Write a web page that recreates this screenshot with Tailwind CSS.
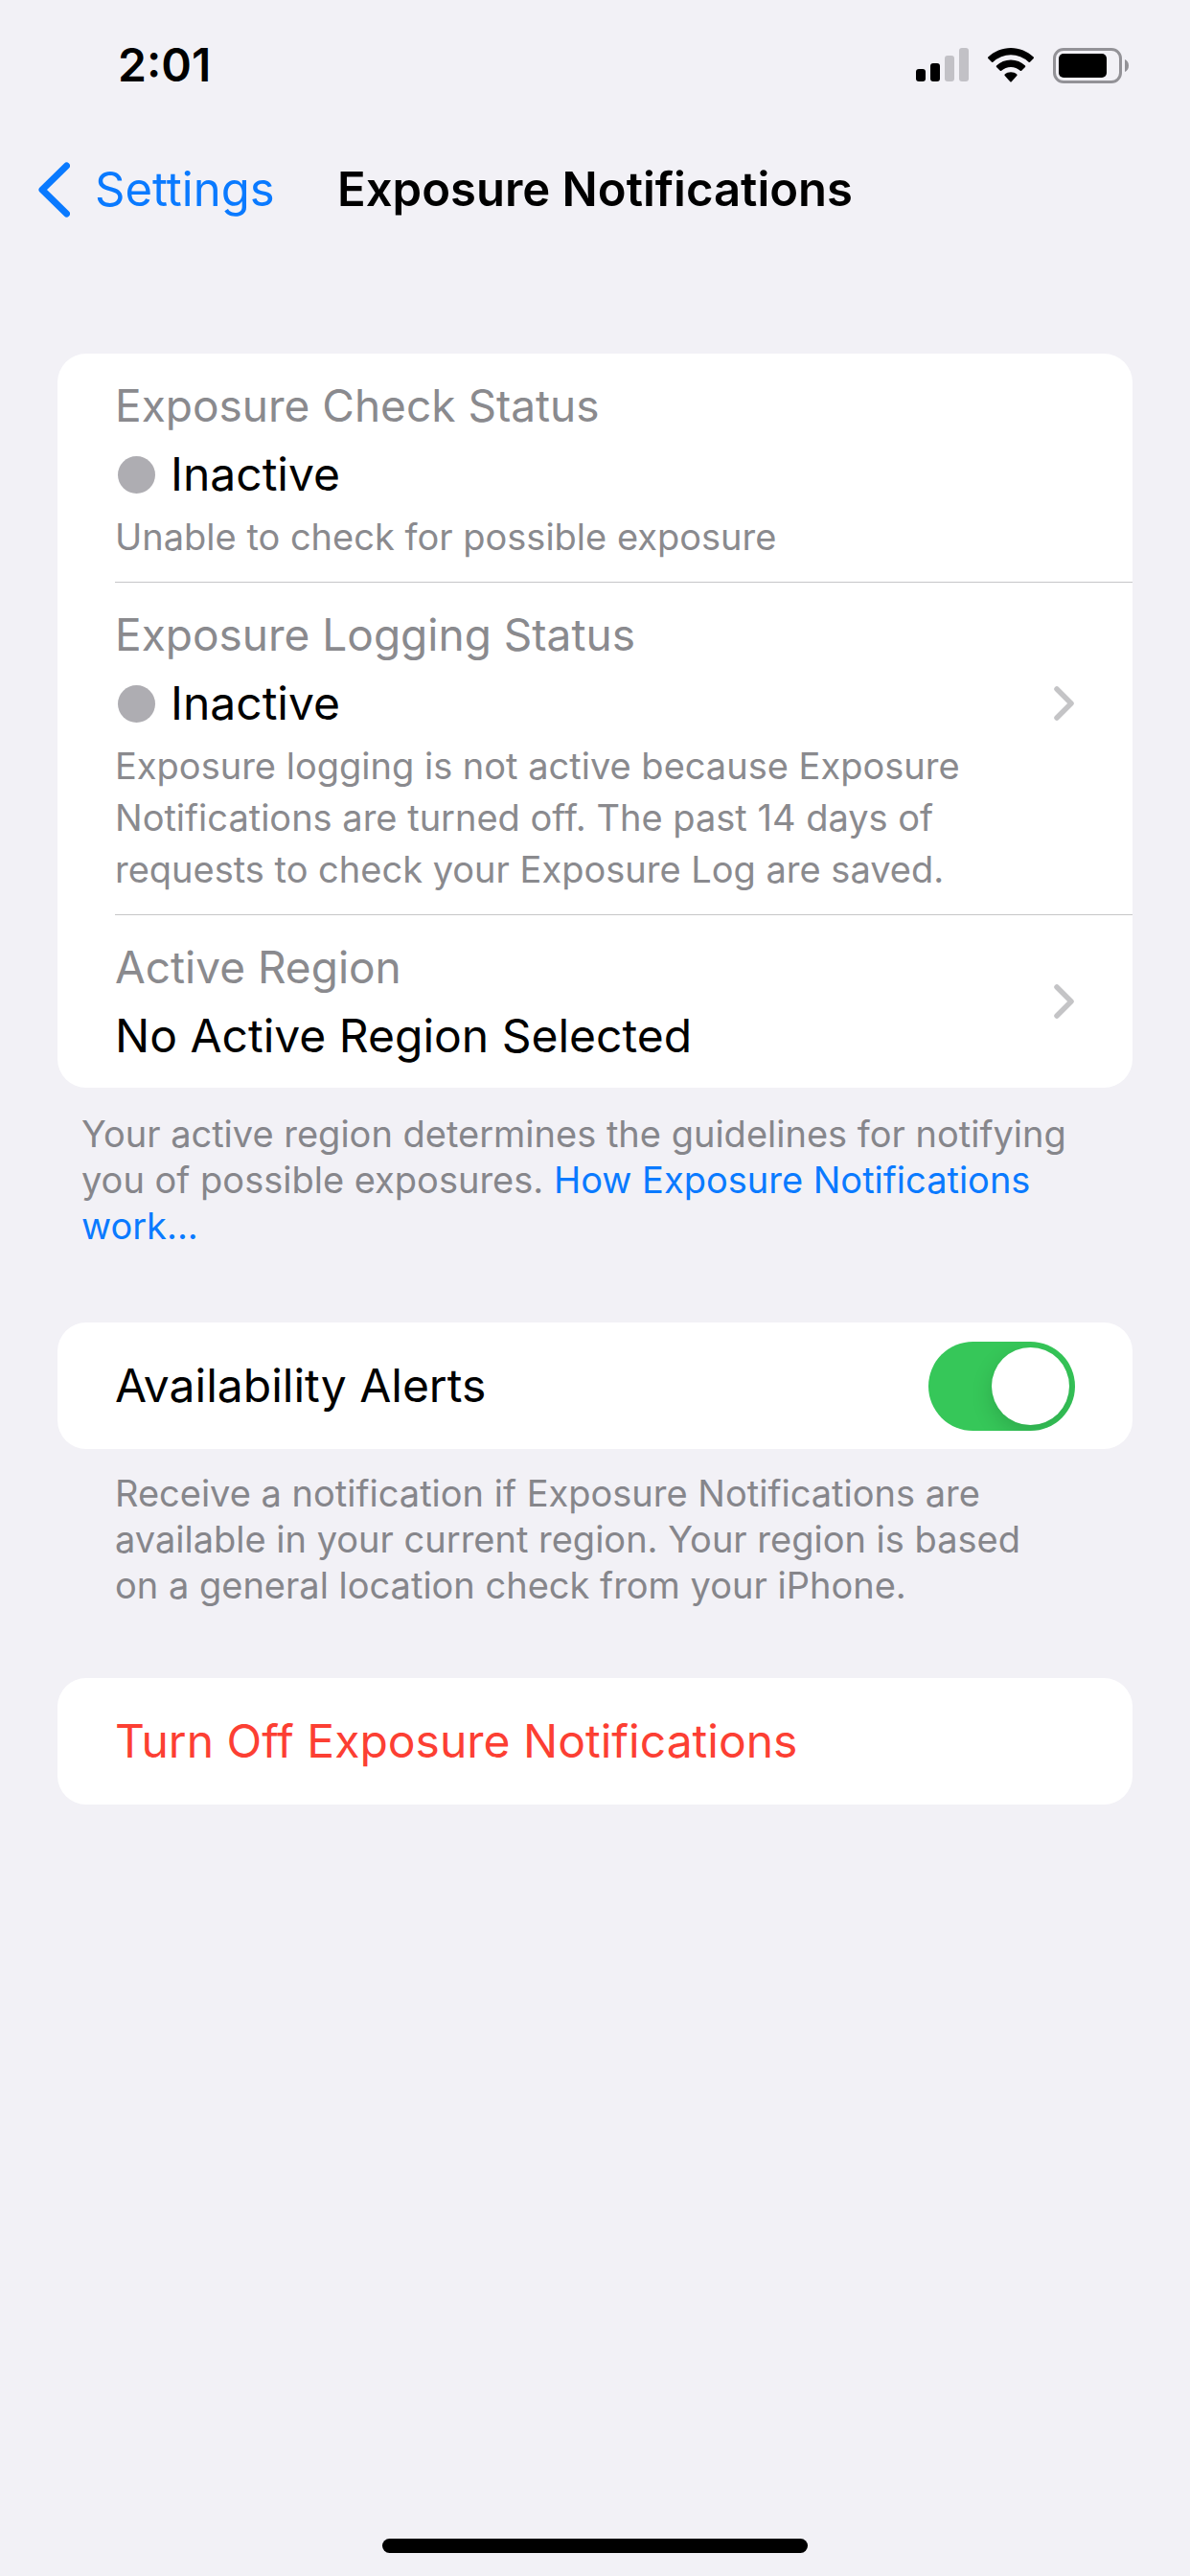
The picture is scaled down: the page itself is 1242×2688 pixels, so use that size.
<!DOCTYPE html>
<html lang="en">
<head>
<meta charset="utf-8">
<meta name="viewport" content="width=device-width, initial-scale=1">
<title>Exposure Notifications</title>
<script src="https://cdn.jsdelivr.net/npm/@tailwindcss/browser@4"></script>
</head>
<body class="flex min-h-screen flex-col bg-[#f2f1f6] font-[Inter,sans-serif] text-black">

<!-- Status bar -->
<div class="flex h-[136px] items-center justify-between pr-16 pl-[123px]">
  <time class="text-[48px] leading-[60px] font-semibold">2:01</time>
  <div class="flex items-center gap-5">
    <svg class="h-9 w-[55px]" viewBox="0 0 55 36" role="img" aria-label="Signal: 2 of 4 bars">
      <rect x="0" y="22" width="10" height="13" rx="3"/>
      <rect x="15" y="16" width="10" height="19" rx="3"/>
      <rect x="30" y="8" width="10" height="27" rx="3" fill="#c2c1c6"/>
      <rect x="45" y="0" width="10" height="35" rx="3" fill="#c2c1c6"/>
    </svg>
    <svg class="h-9 w-12" viewBox="0 0 48 36" role="img" aria-label="Wi-Fi">
      <path d="M24 0C33 0 41.500 3.600 47.700 9.600Q48.300 10.300 47.700 11L44 14.800Q43.300 15.400 42.600 14.800A27 27 0 0 0 5.400 14.800Q4.700 15.400 4 14.800L.3 11Q-.3 10.300 .3 9.600C6.500 3.600 15 0 24 0Z"/>
      <path d="M24 12.600C29.700 12.600 35 14.800 39 18.600Q39.600 19.300 39 20L35.200 23.800Q34.500 24.400 33.800 23.800A14.500 14.500 0 0 0 14.200 23.800Q13.500 24.400 12.800 23.800L9 20Q8.400 19.300 9 18.600C13 14.800 18.300 12.600 24 12.600Z"/>
      <path d="M24 25.200C26.400 25.200 28.600 26 30.300 27.500Q31 28.200 30.300 29L24.700 35.200Q24 35.900 23.300 35.200L17.700 29Q17 28.200 17.700 27.500C19.400 26 21.600 25.200 24 25.200Z"/>
    </svg>
    <svg class="h-[37px] w-[79px]" viewBox="0 0 79 37" role="img" aria-label="Battery">
      <rect x="1.500" y="1.500" width="69" height="34" rx="9.500" fill="none" stroke="#939297" stroke-width="3"/>
      <rect x="6" y="6" width="50" height="25" rx="5"/>
      <path d="M75 12C77.500 13 79 15.500 79 18.500S77.500 24 75 25Z" fill="#939297"/>
    </svg>
  </div>
</div>

<!-- Navigation bar -->
<header class="grid h-[124px] grid-cols-[1fr_auto_1fr] items-center px-10">
  <a href="#settings" class="flex items-center gap-[26px] text-[49px] leading-[60px] text-[#0a7aff]">
    <svg class="h-[58px] w-[33px]" viewBox="0 0 33 58" fill="none" stroke="currentColor" stroke-width="7" stroke-linecap="round" stroke-linejoin="round" aria-hidden="true"><path d="M29.500 4 4 29l25.500 25"/></svg>
    Settings
  </a>
  <h1 class="text-[49px] leading-[60px] font-semibold">Exposure Notifications</h1>
</header>

<main class="flex-1 px-[60px] pt-[109px]">

  <section>
    <div class="overflow-hidden rounded-[30px] bg-white pl-[60px]">
      <div class="border-b border-[#c6c6c8] pt-[18px] pr-[60px] pb-5">
        <h2 class="text-[46px] leading-[72px] text-[#8a8a8e]">Exposure Check Status</h2>
        <p class="flex items-center gap-4 pl-[3px] text-[48px] leading-[72px]"><span class="size-[39px] rounded-full bg-[#aeadb2]"></span>Inactive</p>
        <p class="mt-0.5 text-[38px] leading-[54px] text-[#8a8a8e]">Unable to check for possible exposure</p>
      </div>
      <a href="#log" class="block border-b border-[#c6c6c8] pt-[18px] pr-[60px] pb-5">
        <h2 class="text-[46px] leading-[72px] text-[#8a8a8e]">Exposure Logging Status</h2>
        <div class="flex items-center justify-between">
          <p class="flex items-center gap-4 pl-[3px] text-[48px] leading-[72px]"><span class="size-[39px] rounded-full bg-[#aeadb2]"></span>Inactive</p>
          <svg class="h-9 w-6" viewBox="0 0 24 36" fill="none" stroke="#c4c4c6" stroke-width="5.500" stroke-linecap="round" stroke-linejoin="round" aria-hidden="true"><path d="M5 3 20 18 5 33"/></svg>
        </div>
        <p class="mt-0.5 pr-20 text-[38px] leading-[54px] text-[#8a8a8e]">Exposure logging is not active because Exposure Notifications are turned off. The past 14 days of requests to check your Exposure Log are saved.</p>
      </a>
      <a href="#region" class="flex items-center justify-between py-[18px] pr-[60px]">
        <div>
          <h2 class="text-[46px] leading-[72px] text-[#8a8a8e]">Active Region</h2>
          <p class="text-[48px] leading-[72px]">No Active Region Selected</p>
        </div>
        <svg class="h-9 w-6" viewBox="0 0 24 36" fill="none" stroke="#c4c4c6" stroke-width="5.500" stroke-linecap="round" stroke-linejoin="round" aria-hidden="true"><path d="M5 3 20 18 5 33"/></svg>
      </a>
    </div>
    <p class="pt-6 pr-10 pl-[25px] text-[38px] leading-[48px] text-[#86868b]">Your active region determines the guidelines for notifying you of possible exposures. <a href="#how" class="text-[#0a7aff]">How Exposure Notifications work...</a></p>
  </section>

  <section class="mt-[77px]">
    <div class="flex h-[132px] items-center justify-between rounded-[30px] bg-white px-[60px]">
      <label for="alerts" class="text-[48px] leading-[72px]">Availability Alerts</label>
      <input id="alerts" type="checkbox" role="switch" checked class="h-[93px] w-[153px] appearance-none overflow-hidden rounded-full bg-[#d9d9de] p-1.5 before:block before:size-[81px] before:rounded-full before:bg-white before:shadow-[0_8px_22px_rgba(0,0,0,0.15)] checked:bg-[#36c759] checked:before:ml-[60px]">
    </div>
    <p class="pt-[22px] pr-20 pl-[60px] text-[38px] leading-[48px] text-[#86868b]">Receive a notification if Exposure Notifications are available in your current region. Your region is based on a general location check from your iPhone.</p>
  </section>

  <section class="mt-[73px]">
    <button type="button" class="flex h-[132px] w-full items-center rounded-[30px] bg-white px-[60px] text-left text-[48px] leading-[72px] text-[#fc3f33]">Turn Off Exposure Notifications</button>
  </section>
</main>

<!-- Home indicator -->
<div class="flex justify-center pb-6"><div class="h-[15px] w-[444px] rounded-full bg-black"></div></div>

</body>
</html>
